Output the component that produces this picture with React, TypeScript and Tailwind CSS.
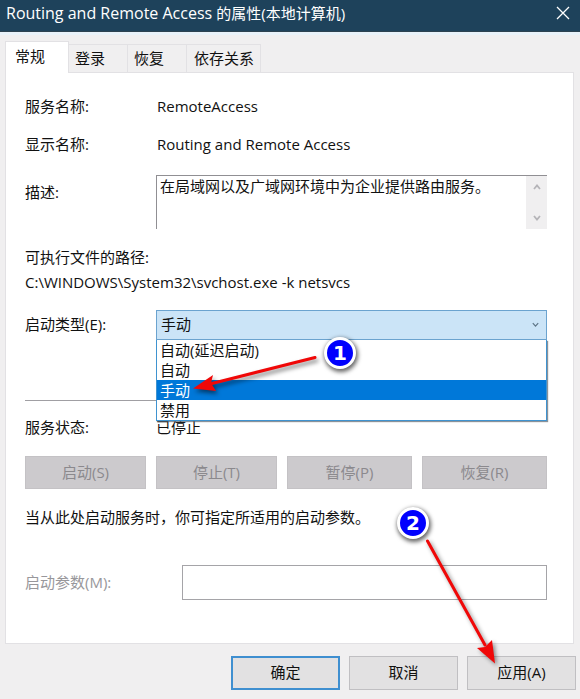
import { useState } from 'react';

const tabs = ['登录', '恢复', '依存关系'];
const startupTypes = ['自动(延迟启动)', '自动', '手动', '禁用'];
const serviceActions = ['启动(S)', '停止(T)', '暂停(P)', '恢复(R)'];

function Marker({ label, className }: { label: string; className: string }) {
  return (
    <span
      className={`pointer-events-none absolute z-30 flex h-8 w-8 items-center justify-center rounded-full border-[3px] border-white bg-[#0000fe] font-['DejaVu_Sans'] text-[20px] leading-none font-bold text-white shadow-[1px_2px_4px_1px_rgba(0,0,0,0.6)] ${className}`}
    >
      {label}
    </span>
  );
}

export default function App() {
  const [tab, setTab] = useState('常规');
  const [startup, setStartup] = useState('手动');
  const [params, setParams] = useState('');

  return (
    <div className="flex min-h-screen flex-col bg-[#f0eff0] font-['Open_Sans','Noto_Sans_CJK_SC',sans-serif] text-[15px] leading-5 text-[#111111]">
      {/* Title bar */}
      <header className="flex h-8 items-center justify-between border-b border-[#2d4250] bg-[#1e425b] pr-[10px] pb-[5px] pl-[6px] text-white">
        <h1 className="text-[16px]">
          Routing and Remote Access <span className="text-[15px]">的属性(本地计算机)</span>
        </h1>
        <button aria-label="关闭">
          <svg width="14" height="14" viewBox="0 0 14 14" fill="none" stroke="currentColor" strokeWidth="1.3">
            <path d="M1 1l12 12M13 1L1 13" />
          </svg>
        </button>
      </header>

      <main className="border-t-[3px] border-[#e9f2f9] pr-[6px] pl-[5px]">
        {/* Tabs */}
        <div role="tablist" className="flex items-end pt-[6px]">
          <button
            role="tab"
            aria-selected={tab === '常规'}
            onClick={() => setTab('常规')}
            className="z-10 -mb-px h-8 w-16 border-t border-r border-l border-[#e2e1e4] bg-white pr-[14px] pb-1 text-center"
          >
            常规
          </button>
          {tabs.map(name => (
            <button
              key={name}
              role="tab"
              aria-selected={tab === name}
              onClick={() => setTab(name)}
              className="h-7 border-t border-r border-[#e2e1e4] pr-[22px] pb-px pl-[6px] last:pr-[6px] last:pl-[7px]"
            >
              {name}
            </button>
          ))}
        </div>

        {/* General page */}
        <section className="border border-[#e2e1e4] bg-white pt-[14px] pr-[26px] pb-[43px] pl-[19px]">
          <dl className="grid grid-cols-[132px_1fr]">
            <dt className="py-[9px]">服务名称:</dt>
            <dd className="py-[9px]">RemoteAccess</dd>
            <dt className="py-[9px]">显示名称:</dt>
            <dd className="py-[9px]">Routing and Remote Access</dd>
          </dl>

          <div className="mt-3 grid grid-cols-[131px_1fr] items-start">
            <label htmlFor="description" className="pt-[7px]">
              描述:
            </label>
            <div className="flex h-[54px] border-t border-l border-[#908f93]">
              <textarea
                id="description"
                readOnly
                className="min-w-0 flex-1 resize-none overflow-hidden pl-[3px] outline-none"
                value="在局域网以及广域网环境中为企业提供路由服务。"
              />
              <div className="flex w-[21px] flex-col items-center justify-between bg-[#f0eff0] py-2 text-[#b5b4b8]">
                <svg width="8" height="6" viewBox="0 0 8 6" fill="none" stroke="currentColor" strokeWidth="1.8">
                  <path d="M1 5l3-3.5L7 5" />
                </svg>
                <svg width="8" height="6" viewBox="0 0 8 6" fill="none" stroke="currentColor" strokeWidth="1.8">
                  <path d="M1 1l3 3.5L7 1" />
                </svg>
              </div>
            </div>
          </div>

          <p className="mt-[18px]">可执行文件的路径:</p>
          <p className="mt-[5px]">C:\WINDOWS\System32\svchost.exe -k netsvcs</p>

          {/* Startup type with its list open */}
          <div className="mt-[18px] grid grid-cols-[131px_1fr] items-center">
            <label htmlFor="startup" className="pb-[2px]">
              启动类型(E):
            </label>
            <div className="relative">
              <select
                id="startup"
                value={startup}
                onChange={e => setStartup(e.target.value)}
                className="block h-[30px] w-full appearance-none border border-[#6ba3cf] bg-[#cbe4f7] pb-[2px] pl-1 outline-none"
              >
                {startupTypes.map(type => (
                  <option key={type}>{type}</option>
                ))}
              </select>
              <svg
                className="pointer-events-none absolute top-3 right-2 text-[#5d7586]"
                width="7"
                height="6"
                viewBox="0 0 7 6"
                fill="none"
                stroke="currentColor"
                strokeWidth="1.2"
              >
                <path d="M.8 1.2l2.7 3 2.7-3" />
              </svg>
              <ul
                role="listbox"
                aria-label="启动类型"
                className="absolute top-[30px] right-0 left-0 z-20 border-r border-b border-l border-[#3f93d0] bg-white shadow-[1px_1px_1px_rgba(90,100,110,0.7)]"
              >
                {startupTypes.map(type => (
                  <li
                    key={type}
                    role="option"
                    aria-selected={type === startup}
                    onClick={() => setStartup(type)}
                    className={`h-5 pl-[3px] ${type === startup ? 'bg-[#0078d9] text-white' : ''}`}
                  >
                    {type}
                  </li>
                ))}
              </ul>
              <svg
                className="pointer-events-none absolute top-10 left-8 z-30 drop-shadow-[2px_3px_2px_rgba(0,0,0,0.5)]"
                width="136"
                height="56"
                viewBox="0 0 136 56"
              >
                <path d="M22 34L127 7.5" stroke="#f00808" strokeWidth="3" strokeLinecap="round" />
                <path d="M5 38.5L25 25L23 33L28 41Z" fill="#f00808" />
              </svg>
              <Marker label="1" className="top-[27px] left-[168px]" />
            </div>
          </div>

          <hr className="mt-[60px] border-[#a09fa3]" />

          <div className="mt-4 grid grid-cols-[131px_1fr]">
            <span>服务状态:</span>
            <span>已停止</span>
          </div>

          <div className="mt-[19px] grid grid-cols-[121px_121px_1fr_1fr] gap-[10px]">
            {serviceActions.map(action => (
              <button
                key={action}
                disabled
                className="h-[33px] border border-[#c4c2c5] bg-[#cccacd] pb-[2px] text-[#8b898d]"
              >
                {action}
              </button>
            ))}
          </div>

          <p className="mt-[18px]">当从此处启动服务时，你可指定所适用的启动参数。</p>

          <div className="mt-[38px] grid grid-cols-[157px_1fr] items-center">
            <label htmlFor="params" className="pb-[2px] text-[#98979b]">
              启动参数(M):
            </label>
            <input
              id="params"
              value={params}
              onChange={e => setParams(e.target.value)}
              className="h-[35px] min-w-0 border border-[#a5a4a8] bg-white px-2 outline-none"
            />
          </div>
        </section>
      </main>

      {/* Dialog buttons */}
      <footer className="flex justify-end gap-[9px] pt-3 pr-1 pb-[10px]">
        <button className="h-[34px] w-[109px] border-2 border-[#3f8fd0] bg-[#e2e1e2] pb-[2px]">确定</button>
        <button className="h-[34px] w-[109px] border border-[#c0bfc2] bg-[#e2e1e2] pb-[2px]">取消</button>
        <div className="relative">
          <button className="h-[34px] w-[109px] border border-[#c0bfc2] bg-[#e2e1e2] pb-[2px]">应用(A)</button>
          <svg
            className="pointer-events-none absolute right-[76px] bottom-6 z-30 drop-shadow-[2px_2px_2px_rgba(0,0,0,0.45)]"
            width="80"
            height="132"
            viewBox="0 0 80 132"
          >
            <path d="M7.500 7L65 111" stroke="#f00808" strokeWidth="3" strokeLinecap="round" />
            <path d="M75 129.500L57 114L65 113L72 106Z" fill="#f00808" />
          </svg>
          <Marker label="2" className="right-[147px] bottom-[151px]" />
        </div>
      </footer>
    </div>
  );
}
